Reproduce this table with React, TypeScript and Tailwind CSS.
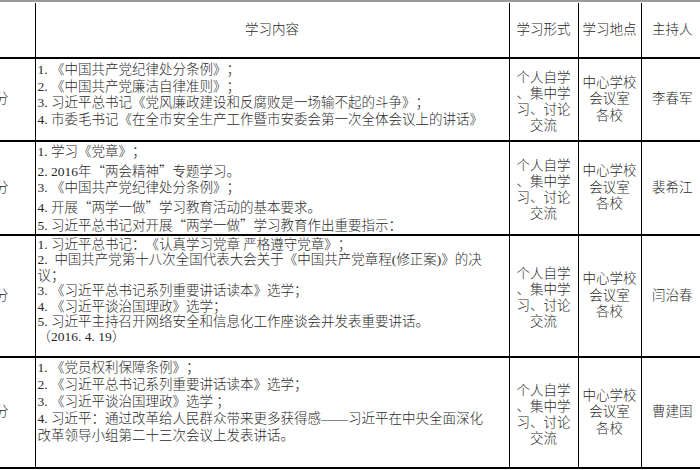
const rows = [
  {
    h: "h-[83px]",
    lh: "leading-[16.5px]",
    lineH: "h-[16.5px]",
    pt: "pt-[3px]",
    lines: [
      "1. 《中国共产党纪律处分条例》；",
      "2. 《中国共产党廉洁自律准则》；",
      "3. 习近平总书记《党风廉政建设和反腐败是一场输不起的斗争》；",
      "4. 市委毛书记《在全市安全生产工作暨市安委会第一次全体会议上的讲话》",
    ],
    host: "李春军",
  },
  {
    h: "h-[94px]",
    lh: "leading-[18px]",
    lineH: "h-[18px]",
    pt: "pt-[1px]",
    lines: [
      "1. 学习《党章》；",
      "2. 2016年“两会精神”专题学习。",
      "3. 《中国共产党纪律处分条例》；",
      "4. 开展“两学一做”学习教育活动的基本要求。",
      "5. 习近平总书记对开展“两学一做”学习教育作出重要指示：",
    ],
    host: "裴希江",
  },
  {
    h: "h-[122px]",
    lh: "leading-[15.4px]",
    lineH: "h-[15.4px]",
    pt: "pt-[1px]",
    lines: [
      "1. 习近平总书记：《认真学习党章 严格遵守党章》；",
      "2.  中国共产党第十八次全国代表大会关于《中国共产党章程(修正案)》的决",
      "议；",
      "3. 《习近平总书记系列重要讲话读本》选学；",
      "4. 《习近平谈治国理政》选学；",
      "5. 习近平主持召开网络安全和信息化工作座谈会并发表重要讲话。",
      "（2016. 4. 19）",
    ],
    host: "闫治春",
  },
  {
    h: "h-[111px]",
    lh: "leading-[17px]",
    lineH: "h-[17px]",
    pt: "pt-[1px]",
    lines: [
      "1. 《党员权利保障条例》；",
      "2. 《习近平总书记系列重要讲话读本》选学；",
      "3. 《习近平谈治国理政》选学 ；",
      "4. 习近平：通过改革给人民群众带来更多获得感——习近平在中央全面深化",
      "改革领导小组第二十三次会议上发表讲话。",
    ],
    host: "曹建国",
  },
];

const font = {
  fontFamily: '"Liberation Serif", "Noto Sans CJK SC", serif',
};

// full-width quotes come from the CJK font, not the Latin one
const Line = ({ text, h }: { text: string; h: string }) => (
  <div className={`whitespace-pre ${h}`}>
    {text.split(/([“”])/).map((part, i) =>
      part === "“" || part === "”" ? (
        <span key={i} className="font-['Noto_Sans_CJK_SC']">
          {part}
        </span>
      ) : (
        <span key={i}>{part}</span>
      )
    )}
  </div>
);

export default function App() {
  return (
    <div
      lang="zh-CN"
      className="w-[700px] h-[470px] overflow-hidden bg-white text-[#2a2a2a] text-[13.5px] font-light [text-spacing-trim:space-all]"
      style={font}
    >
      <div className="pt-[1px] border-t-2 border-[#9a9a9a] -ml-[45px] w-[748px]">
        <table className="table-fixed border-collapse w-[748px]">
          <colgroup>
            <col className="w-[80px]" />
            <col className="w-[474px]" />
            <col className="w-[69px]" />
            <col className="w-[63px]" />
            <col className="w-[62px]" />
          </colgroup>
          <thead>
            <tr className="h-[55px] border-b-2 border-black">
              <th className="font-light border-r border-black"></th>
              <th className="font-light border-r border-black text-center">学习内容</th>
              <th className="font-light border-r border-black text-center">学习形式</th>
              <th className="font-light border-r border-black text-center">学习地点</th>
              <th className="font-light text-center">主持人</th>
            </tr>
          </thead>
          <tbody>
            {rows.map((r) => (
              <tr key={r.host} className={`${r.h} border-b-2 border-black`}>
                <td className="border-r border-black text-right pr-[26px] align-middle">分</td>
                <td className={`border-r border-black align-top pl-[2px] ${r.pt} ${r.lh}`}>
                  {r.lines.map((l, i) => (
                    <Line key={i} text={l} h={r.lineH} />
                  ))}
                </td>
                <td className="border-r border-black text-center align-middle leading-[16px] pt-[4px]">
                  个人自学
                  <br />
                  、集中学
                  <br />
                  习、讨论
                  <br />
                  交流
                </td>
                <td className="border-r border-black text-center align-middle leading-[16.5px]">
                  中心学校
                  <br />
                  会议室
                  <br />
                  各校
                </td>
                <td className="text-center align-middle">{r.host}</td>
              </tr>
            ))}
          </tbody>
        </table>
      </div>
    </div>
  );
}
